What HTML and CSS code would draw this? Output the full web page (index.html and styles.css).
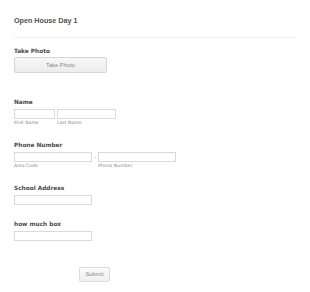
FILE: index.html
```html
<!DOCTYPE html>
<html>
<head>
    <title>Open House Day 1</title>
    <link rel="stylesheet" href="styles.css">
</head>
<body>
    <form class="form-wrap">
        <h1 class="form-title">Open House Day 1</h1>
        <div class="divider"></div>

        <div class="field field-photo">
            <label class="field-label">Take Photo</label>
            <button type="button" class="photo-btn">Take Photo</button>
        </div>

        <div class="field field-name">
            <label class="field-label">Name</label>
            <div class="row">
                <div class="sub">
                    <input type="text" class="input input-first">
                    <span class="sub-label">First Name</span>
                </div>
                <div class="sub">
                    <input type="text" class="input input-last">
                    <span class="sub-label">Last Name</span>
                </div>
            </div>
        </div>

        <div class="field">
            <label class="field-label">Phone Number</label>
            <div class="row">
                <div class="sub">
                    <input type="text" class="input input-phone">
                    <span class="sub-label">Area Code</span>
                </div>
                <span class="dash">-</span>
                <div class="sub">
                    <input type="text" class="input input-phone">
                    <span class="sub-label">Phone Number</span>
                </div>
            </div>
        </div>

        <div class="field">
            <label class="field-label">School Address</label>
            <input type="text" class="input input-single">
        </div>

        <div class="field">
            <label class="field-label">how much box</label>
            <input type="text" class="input input-single">
        </div>

        <div class="submit-row">
            <button type="submit" class="submit-btn">Submit</button>
        </div>
    </form>
</body>
</html>
```

FILE: styles.css
```css
body {
    margin: 0;
    background: #fff;
    font-family: 'DejaVu Sans', Verdana, sans-serif;
    color: #555;
}

.form-wrap {
    width: 281px;
    padding: 14px 0 0 14px;
}

.form-title {
    margin: 0;
    font-family: 'Liberation Sans', Arial, sans-serif;
    font-size: 7.2px;
    font-weight: bold;
    line-height: 13px;
    color: #505050;
}

.divider {
    margin-top: 10px;
    height: 1px;
    background: #f0f0f0;
}

.field {
    display: flex;
    flex-direction: column;
    align-items: flex-start;
    padding-top: 14px;
}

.field-photo {
    padding-top: 8px;
}

.field-name {
    padding-top: 24px;
}

.field-label {
    font-size: 5.8px;
    font-weight: bold;
    line-height: 10px;
    color: #4a4a4a;
    margin-bottom: 2px;
}

.photo-btn {
    margin-top: -1px;
    width: 93px;
    height: 16px;
    padding: 0;
    border: 1px solid #d6d6d6;
    border-radius: 2px;
    background: linear-gradient(#f7f7f7, #ececec);
    font-family: 'Liberation Sans', Arial, sans-serif;
    font-size: 5.8px;
    color: #888;
}

.row {
    display: flex;
    align-items: flex-start;
    gap: 2px;
}

.sub {
    display: flex;
    flex-direction: column;
}

.input {
    box-sizing: border-box;
    height: 10px;
    margin: 0;
    padding: 0;
    border: 1px solid #d9d9d9;
    background: #fff;
}

.input-first { width: 41px; }
.input-last { width: 59px; }
.input-phone { width: 78px; }
.input-single { width: 78px; }

.dash {
    font-size: 6px;
    line-height: 10px;
    color: #999;
}

.sub-label {
    margin-top: 1px;
    font-size: 4.6px;
    line-height: 6px;
    color: #888;
}

.submit-row {
    padding: 20px 0 0 65px;
}

.submit-btn {
    width: 31px;
    height: 15px;
    padding: 0;
    border: 1px solid #dcdcdc;
    border-radius: 2px;
    background: linear-gradient(#fafafa, #f0f0f0);
    font-family: 'Liberation Sans', Arial, sans-serif;
    font-size: 5.8px;
    color: #888;
}
```
